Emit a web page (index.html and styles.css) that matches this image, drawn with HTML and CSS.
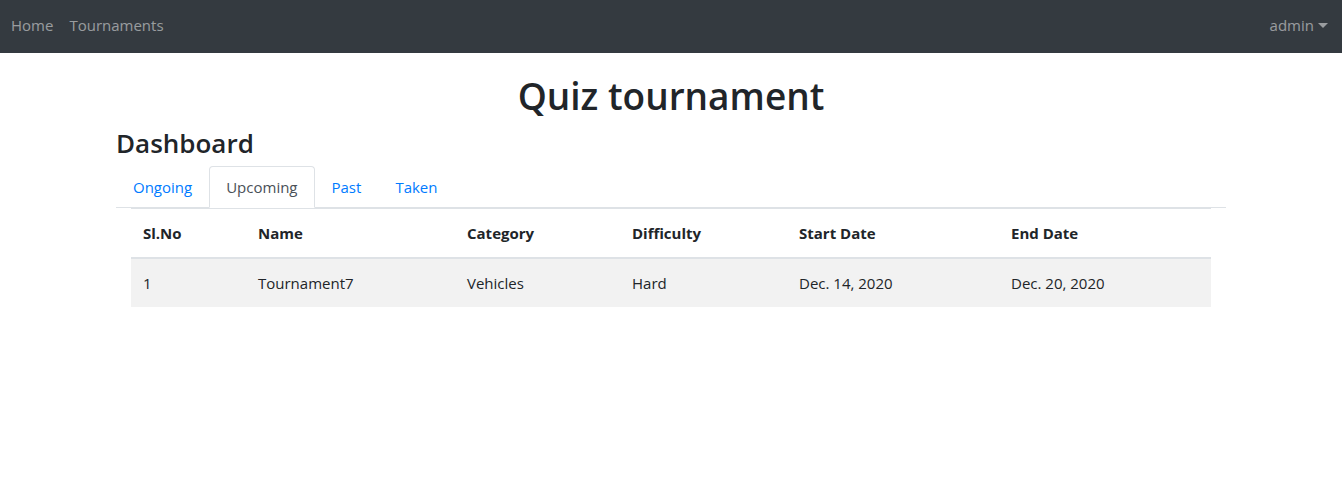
FILE: index.html
```html
<!DOCTYPE html>
<html lang="en">
<head>
<meta charset="utf-8">
<title>Quiz tournament</title>
<link rel="stylesheet" href="styles.css">
</head>
<body>
<nav class="navbar">
  <div class="nav-left">
    <a class="nav-link" href="#">Home</a>
    <a class="nav-link" href="#">Tournaments</a>
  </div>
  <a class="nav-link dropdown" href="#">admin<span class="caret"></span></a>
</nav>
<main class="container">
  <h1 class="title">Quiz tournament</h1>
  <h2 class="subtitle">Dashboard</h2>
  <ul class="tabs">
    <li><a class="tab" href="#">Ongoing</a></li>
    <li><a class="tab active" href="#">Upcoming</a></li>
    <li><a class="tab" href="#">Past</a></li>
    <li><a class="tab" href="#">Taken</a></li>
  </ul>
  <div class="tab-content">
    <table class="table">
      <thead>
        <tr>
          <th class="c1">Sl.No</th>
          <th class="c2">Name</th>
          <th class="c3">Category</th>
          <th class="c4">Difficulty</th>
          <th class="c5">Start Date</th>
          <th class="c6">End Date</th>
        </tr>
      </thead>
      <tbody>
        <tr>
          <td>1</td>
          <td>Tournament7</td>
          <td>Vehicles</td>
          <td>Hard</td>
          <td>Dec. 14, 2020</td>
          <td>Dec. 20, 2020</td>
        </tr>
      </tbody>
    </table>
  </div>
</main>
</body>
</html>
```
FILE: styles.css
```css
* { box-sizing: border-box; }
body {
  margin: 0;
  font-family: "Open Sans", "Noto Sans", sans-serif;
  font-size: 15px;
  line-height: 24px;
  color: #212529;
  background: #fff;
}
.navbar {
  background: #343a40;
  height: 53px;
  display: flex;
  align-items: center;
  justify-content: space-between;
  padding: 0 14px 3px 11px;
}
.nav-left { display: flex; gap: 16px; }
.nav-link {
  color: rgba(255,255,255,.5);
  text-decoration: none;
  font-size: 15px;
}
.dropdown { display: flex; align-items: center; }
.caret {
  display: inline-block;
  margin-left: 4px;
  width: 0; height: 0;
  border-top: 5px solid rgba(255,255,255,.5);
  border-left: 5px solid transparent;
  border-right: 5px solid transparent;
}
.container {
  max-width: 1140px;
  margin: 0 auto;
  padding: 0 15px;
}
.title {
  margin: 21px 0 10px;
  text-align: center;
  font-size: 37px;
  font-weight: 600;
  line-height: 1.2;
}
.subtitle {
  margin: 0 0 6px;
  font-size: 26px;
  font-weight: 600;
  line-height: 1.2;
}
.tabs {
  list-style: none;
  margin: 0;
  padding: 0;
  display: flex;
  border-bottom: 1px solid #dee2e6;
}
.tabs li { margin-bottom: -1px; }
.tab {
  display: block;
  padding: 8px 16px;
  border: 1px solid transparent;
  border-top-left-radius: 4px;
  border-top-right-radius: 4px;
  color: #007bff;
  text-decoration: none;
}
.tab.active {
  color: #495057;
  background: #fff;
  border-color: #dee2e6 #dee2e6 #fff;
}
.tab-content { padding: 0 15px; }
.table {
  width: 100%;
  border-collapse: collapse;
  table-layout: fixed;
}
.table th, .table td {
  padding: 12px;
  text-align: left;
  vertical-align: top;
  border-top: 1px solid #dee2e6;
}
.table th { font-weight: 700; }
.table thead th { border-bottom: 2px solid #dee2e6; }
.table tbody tr { background: #f2f2f2; }
.c1 { width: 115px; }
.c2 { width: 209px; }
.c3 { width: 165px; }
.c4 { width: 167px; }
.c5 { width: 212px; }
.c6 { width: auto; }
```
